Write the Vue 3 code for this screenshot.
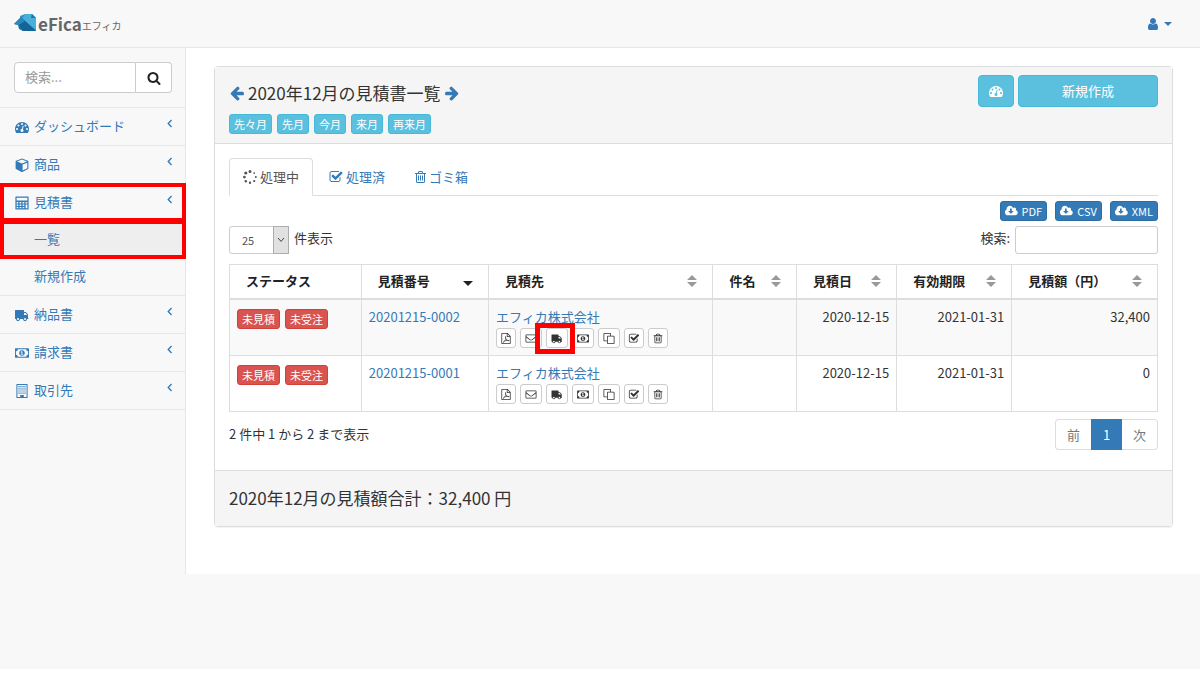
<script setup>
import { h, ref } from 'vue'

const glyphs = {
  dash: ['0 0 1792 1792', 'M384 1152q0-53-37.5-90.5t-90.5-37.5-90.5 37.5-37.5 90.5 37.5 90.5 90.5 37.5 90.5-37.5 37.5-90.5zm192-448q0-53-37.5-90.5t-90.5-37.5-90.5 37.5-37.5 90.5 37.5 90.5 90.5 37.5 90.5-37.5 37.5-90.5zm428 481l101-382q6-26-7.5-48.5t-38.5-29.5-48 6.5-30 39.5l-101 382q-60 5-107 43.5t-63 98.5q-20 77 20 146t117 89 146-20 89-117q16-60-6-117t-72-91zm660-33q0-53-37.5-90.5t-90.5-37.5-90.5 37.5-37.5 90.5 37.5 90.5 90.5 37.5 90.5-37.5 37.5-90.5zm-640-640q0-53-37.5-90.5t-90.5-37.5-90.5 37.5-37.5 90.5 37.5 90.5 90.5 37.5 90.5-37.5 37.5-90.5zm448 192q0-53-37.5-90.5t-90.5-37.5-90.5 37.5-37.5 90.5 37.5 90.5 90.5 37.5 90.5-37.5 37.5-90.5zm320 448q0 261-141 483-19 29-54 29h-1402q-35 0-54-29-141-221-141-483 0-182 71-348t191-286 286-191 348-71 348 71 286 191 191 286 71 348z'],
  search: ['0 0 1792 1792', 'M1216 832q0-185-131.5-316.5t-316.5-131.5-316.5 131.5-131.5 316.5 131.5 316.5 316.5 131.5 316.5-131.5 131.5-316.5zm512 832q0 52-38 90t-90 38q-54 0-90-38l-343-342q-179 124-399 124-143 0-273.5-55.5t-225-150-150-225-55.5-273.5 55.5-273.5 150-225 225-150 273.5-55.5 273.5 55.5 225 150 150 225 55.5 273.5q0 220-124 399l343 343q37 37 37 90z'],
  user: ['0 0 1792 1792', 'M1536 1399q0 109-62.5 187t-150.5 78h-854q-88 0-150.5-78t-62.5-187q0-85 8.5-160.5t31.5-152 58.5-131 94-89 134.5-34.5q131 128 313 128t313-128q76 0 134.5 34.5t94 89 58.5 131 31.5 152 8.5 160.5zm-256-887q0 159-112.5 271.5t-271.5 112.5-271.5-112.5-112.5-271.5 112.5-271.5 271.5-112.5 271.5 112.5 112.5 271.5z'],
  truck: ['0 0 1792 1792', 'M640 1408q0-52-38-90t-90-38-90 38-38 90 38 90 90 38 90-38 38-90zm-384-512h384v-256h-158q-13 0-22 9l-195 195q-9 9-9 22v30zm1280 512q0-52-38-90t-90-38-90 38-38 90 38 90 90 38 90-38 38-90zm256-1088v1024q0 15-4 26.5t-13.5 18.5-16.5 11.5-23.5 6-22.5 2-25.5 0-22.5-.5q0 106-75 181t-181 75-181-75-75-181h-384q0 106-75 181t-181 75-181-75-75-181h-64q-3 0-22.5.5t-25.5 0-22.5-2-23.5-6-16.5-11.5-13.5-18.5-4-26.5q0-26 19-45t45-19v-320q0-8-.5-35t0-38 2.5-34.5 6.5-37 14-30.5 22.5-30l198-198q19-19 50.5-32t58.5-13h160v-192q0-26 19-45t45-19h1024q26 0 45 19t19 45z', true],
  left: ['0 0 1792 1792', 'M1664 896v128q0 53-32.5 90.5t-84.5 37.5h-704l293 294q38 36 38 90t-38 90l-75 76q-37 37-90 37-52 0-91-37l-651-652q-37-37-37-90 0-52 37-91l651-650q38-38 91-38 52 0 90 38l75 74q38 38 38 91t-38 91l-293 293h704q52 0 84.5 37.5t32.5 90.5z'],
  check: ['0 0 1792 1792', 'M1472 930v318q0 119-84.5 203.5t-203.5 84.5h-832q-119 0-203.5-84.5t-84.5-203.5v-832q0-119 84.5-203.5t203.5-84.5h832q63 0 117 25 15 7 18 23 3 17-9 29l-49 49q-10 10-23 10-3 0-9-2-23-6-45-6h-832q-66 0-113 47t-47 113v832q0 66 47 113t113 47h832q66 0 113-47t47-113v-254q0-13 9-22l64-64q10-10 23-10 6 0 12 3 20 8 20 29zm231-489l-814 814q-24 24-57 24t-57-24l-430-430q-24-24-24-57t24-57l110-110q24-24 57-24t57 24l263 263 647-647q24-24 57-24t57 24l110 110q24 24 24 57t-24 57z'],
  trash: ['192 0 1408 1792', 'M704 736v576q0 14-9 23t-23 9h-64q-14 0-23-9t-9-23v-576q0-14 9-23t23-9h64q14 0 23 9t9 23zm256 0v576q0 14-9 23t-23 9h-64q-14 0-23-9t-9-23v-576q0-14 9-23t23-9h64q14 0 23 9t9 23zm256 0v576q0 14-9 23t-23 9h-64q-14 0-23-9t-9-23v-576q0-14 9-23t23-9h64q14 0 23 9t9 23zm128 724v-948h-896v948q0 22 7 40.5t14.5 27 10.5 8.5h832q3 0 10.5-8.5t14.5-27 7-40.5zm-672-1076h448l-48-117q-7-9-17-11h-317q-10 2-17 11zm928 32v64q0 14-9 23t-23 9h-96v948q0 83-47 143.5t-113 60.5h-832q-66 0-113-58.5t-47-141.5v-952h-96q-14 0-23-9t-9-23v-64q0-14 9-23t23-9h309l70-167q15-37 54-63t79-26h320q40 0 79 26t54 63l70 167h309q14 0 23 9t9 23z'],
  cloud: ['0 0 1856 1792', 'M1216 928q0-14-9-23t-23-9h-224v-352q0-13-9.5-22.5t-22.5-9.5h-192q-13 0-22.5 9.5t-9.5 22.5v352h-224q-13 0-22.5 9.5t-9.5 22.5q0 14 9 23l352 352q9 9 23 9t23-9l351-351q10-12 10-24zm640 224q0 159-112.5 271.5t-271.5 112.5h-1088q-185 0-316.5-131.5t-131.5-316.5q0-130 70-240t188-165q-2-30-2-43 0-212 150-362t362-150q156 0 285.5 87t188.5 231q71-62 166-62 106 0 181 75t75 181q0 76-41 138 130 31 213.5 135.5t83.5 238.5z'],
  cube: ['0 0 14 14', 'M7 0.5L13 2.8Q13.4 3 13.4 3.5V10.3Q13.4 10.8 13 11L7.5 13.9Q7 14.1 6.5 13.9L1 11Q.6 10.8 .6 10.3V3.5Q.6 3 1 2.8ZM7 1.6L2 3.5L7 5.4L12 3.5ZM7.6 12.6L12.3 10.2V4.8L7.6 6.6Z'],
  calc: ['0 0 14 14', 'M1 .5H13Q13.6 .5 13.6 1.1V12.9Q13.6 13.5 13 13.5H1Q.4 13.5 .4 12.9V1.1Q.4 .5 1 .5ZM1.6 1.8V4.6H12.4V1.8ZM1.6 6V7.5H3.3V6ZM4.6 6V7.5H6.3V6ZM7.6 6V7.5H9.3V6ZM10.6 6V7.5H12.4V6ZM1.6 8.5V10H3.3V8.5ZM4.6 8.5V10H6.3V8.5ZM7.6 8.5V10H9.3V8.5ZM10.6 8.5V12.3H12.4V8.5ZM1.6 11V12.3H3.3V11ZM4.6 11V12.3H6.3V11ZM7.6 11V12.3H9.3V11Z'],
  money: ['0 0 15 14', 'M.5 2H14.5Q15 2 15 2.5V11.5Q15 12 14.5 12H.5Q0 12 0 11.5V2.5Q0 2 .5 2ZM3 3Q3 5 1 5V9Q3 9 3 11H12Q12 9 14 9V5Q12 5 12 3ZM7.5 4C9.3 4 10.5 5.3 10.5 7S9.3 10 7.5 10S4.5 8.7 4.5 7S5.7 4 7.5 4ZM7.1 5L6 6L6.5 6.6L7 6.3V8.3H6.1V9H9V8.3H8V5Z'],
  building: ['0 0 14 14', 'M2 0H12Q12.6 0 12.6 .6V13.4Q12.6 14 12 14H2Q1.4 14 1.4 13.4V.6Q1.4 0 2 0ZM2.4 1V13H5.2V11H8.8V13H11.6V1ZM3.4 2H4.6V3.2H3.4ZM5.4 2H6.6V3.2H5.4ZM7.4 2H8.6V3.2H7.4ZM9.4 2H10.6V3.2H9.4ZM3.4 4.2H4.6V5.4H3.4ZM5.4 4.2H6.6V5.4H5.4ZM7.4 4.2H8.6V5.4H7.4ZM9.4 4.2H10.6V5.4H9.4ZM3.4 6.4H4.6V7.6H3.4ZM5.4 6.4H6.6V7.6H5.4ZM7.4 6.4H8.6V7.6H7.4ZM9.4 6.4H10.6V7.6H9.4ZM3.4 8.6H4.6V9.8H3.4ZM5.4 8.6H6.6V9.8H5.4ZM7.4 8.6H8.6V9.8H7.4ZM9.4 8.6H10.6V9.8H9.4Z'],
  mail: ['0 0 14 14', 'M1.2 2H12.8Q14 2 14 3.2V10.9Q14 12.1 12.8 12.1H1.2Q0 12.1 0 10.9V3.2Q0 2 1.2 2ZM1 3V3.8Q1 4.4 2 5.2L6 8.3Q7 9 8 8.3L12 5.2Q13 4.4 13 3.8V3ZM1 5.6V11.1H13V5.6L8.7 9Q7 10.2 5.3 9Z'],
  pdf: ['0 0 14 14', 'M1.5 0H9L12.9 3.9V13.2Q12.9 14 12.1 14H1.9Q1.1 14 1.1 13.2V.8Q1.1 0 1.9 0ZM2.1 1V13H11.9V5H8.6Q8 5 8 4.4V1ZM9 1.3V4H11.7ZM6.2 4.2Q7.6 3.6 7 6.6Q7.9 8.5 9.4 9Q11.5 9 11.2 10.2Q10.3 10.7 8.9 9.9Q7 10 5.4 10.5Q3.9 12.8 3 12.2Q2.8 11.2 4.8 10.1Q6 8 6.2 6.7Q5.6 4.8 6.2 4.2ZM6.7 7.7L5.9 9.5L8 9.1Z'],
  copy: ['0 0 14 14', 'M1 0H8.6Q9.5 0 9.5 .9V3.6H13.1Q14 3.6 14 4.5V13.1Q14 14 13.1 14H5.4Q4.5 14 4.5 13.1V10.4H.9Q0 10.4 0 9.5V.9Q0 0 1 0ZM1 1V9.4H4.5V4.5Q4.5 3.6 5.4 3.6H8.5V1ZM5.5 4.6V13H13V4.6Z'],
  chev: ['0 0 8 14', 'M6 2L1.2 7L6 12L7.2 10.8L3.6 7L7.2 3.2Z'],
  spin: ['0 0 14 14', 'M7 0A1.5 1.5 0 1 1 7 3A1.5 1.5 0 1 1 7 0ZM2.8 1.4A1.6 1.6 0 1 1 2.8 4.6A1.6 1.6 0 1 1 2.8 1.4ZM1.4 5.7A1.4 1.4 0 1 1 1.4 8.5A1.4 1.4 0 1 1 1.4 5.7ZM2.8 9.9A1.3 1.3 0 1 1 2.8 12.5A1.3 1.3 0 1 1 2.8 9.9ZM7 11.5A1.2 1.2 0 1 1 7 13.9A1.2 1.2 0 1 1 7 11.5ZM11.2 10A1.1 1.1 0 1 1 11.2 12.2A1.1 1.1 0 1 1 11.2 10ZM12.8 6.1A1 1 0 1 1 12.8 8.1A1 1 0 1 1 12.8 6.1ZM11.2 2.2A.9 .9 0 1 1 11.2 4A.9 .9 0 1 1 11.2 2.2Z'],
}

const Icon = ({ name, flip }) => {
  const [viewBox, d, mirrored] = glyphs[name]
  const width = Number(viewBox.split(' ')[2])
  const turn = flip || mirrored
  return h('svg', { viewBox, 'aria-hidden': 'true' }, [
    h('path', { d, 'fill-rule': 'evenodd', fill: 'currentColor', transform: turn ? `translate(${width} 0) scale(-1 1)` : undefined }),
  ])
}
Icon.props = ['name', 'flip']

const menu = [
  { icon: 'dash', label: 'ダッシュボード' },
  { icon: 'cube', label: '商品' },
  { icon: 'calc', label: '見積書', marked: true, children: [{ label: '一覧', marked: true }, { label: '新規作成' }] },
  { icon: 'truck', label: '納品書' },
  { icon: 'money', label: '請求書' },
  { icon: 'building', label: '取引先' },
]
const months = ['先々月', '先月', '今月', '来月', '再来月']
const tabs = [
  { icon: 'spin', label: '処理中' },
  { icon: 'check', label: '処理済' },
  { icon: 'trash', label: 'ゴミ箱' },
]
const activeTab = ref('処理中')
const columns = [
  { label: 'ステータス', key: 'status' },
  { label: '見積番号', key: 'number', sort: 'desc' },
  { label: '見積先', key: 'client', sort: 'both' },
  { label: '件名', key: 'subject', sort: 'both' },
  { label: '見積日', key: 'date', sort: 'both' },
  { label: '有効期限', key: 'limit', sort: 'both' },
  { label: '見積額（円）', key: 'amount', sort: 'both' },
]
const rows = [
  { number: '20201215-0002', date: '2020-12-15', limit: '2021-01-31', amount: '32,400', marked: 'truck' },
  { number: '20201215-0001', date: '2020-12-15', limit: '2021-01-31', amount: '0' },
]
const actions = [
  { icon: 'pdf', title: 'PDF' },
  { icon: 'mail', title: 'メール' },
  { icon: 'truck', title: '納品書' },
  { icon: 'money', title: '請求書' },
  { icon: 'copy', title: '複製' },
  { icon: 'check', title: '処理済' },
  { icon: 'trash', title: 'ゴミ箱' },
]
</script>

<template>
  <div class="page">
    <header class="topbar">
      <a class="brand" href="#">
        <svg class="logo" viewBox="0 0 23 20" aria-hidden="true">
          <path d="M6 3L11 1L18 1L22 5V18L9 18Z" fill="#2c95c9" />
          <path d="M11 1L18 1L17 5L22 5V17L8 6Z" fill="#4ab0da" />
          <path d="M17 5L18 1L22 5Z" fill="#1d74a8" />
          <path d="M0 11L7 4L22 18L9 18L5 16L4 12Z" fill="#1b74ab" />
          <path d="M0 11L7 4L11 8L5 12Z" fill="#2d88ba" />
          <path d="M5 12L11 8L22 18L9 18Z" fill="#14649a" />
        </svg>
        <strong>eFica</strong><span>エフィカ</span>
      </a>
      <button class="account" type="button" aria-label="アカウント">
        <Icon class="icon" name="user" /><i class="caret"></i>
      </button>
    </header>

    <div class="body">
      <nav class="sidebar">
        <form class="side-search" @submit.prevent>
          <input type="text" placeholder="検索..." aria-label="検索" />
          <button type="submit" aria-label="検索する"><Icon class="icon" name="search" /></button>
        </form>
        <ul class="menu">
          <li v-for="item in menu" :key="item.label">
            <a href="#" class="entry" :class="{ marked: item.marked }">
              <Icon class="icon" :name="item.icon" /><span>{{ item.label }}</span><Icon class="chev" name="chev" />
            </a>
            <ul v-if="item.children" class="submenu">
              <li v-for="child in item.children" :key="child.label">
                <a href="#" class="child" :class="{ marked: child.marked, current: child.marked }">{{ child.label }}</a>
              </li>
            </ul>
          </li>
        </ul>
      </nav>

      <main class="content">
        <section class="panel">
          <div class="panel-head">
            <div>
              <h1>
                <a href="#" aria-label="前の月"><Icon class="arrow" name="left" /></a>
                <span>2020年12月の見積書一覧</span>
                <a href="#" aria-label="次の月"><Icon class="arrow" name="left" :flip="true" /></a>
              </h1>
              <div class="months">
                <button v-for="m in months" :key="m" type="button">{{ m }}</button>
              </div>
            </div>
            <div class="head-actions">
              <button type="button" class="info" aria-label="ダッシュボード"><Icon class="icon" name="dash" /></button>
              <button type="button" class="info wide">新規作成</button>
            </div>
          </div>

          <div class="panel-body">
            <div class="tabs" role="tablist">
              <button v-for="t in tabs" :key="t.label" type="button" role="tab" :aria-selected="activeTab === t.label" :class="{ active: activeTab === t.label }" @click="activeTab = t.label">
                <Icon class="icon" :class="t.icon" :name="t.icon" /><span>{{ t.label }}</span>
              </button>
            </div>

            <div class="exports">
              <button v-for="f in ['PDF', 'CSV', 'XML']" :key="f" type="button"><Icon class="icon" name="cloud" /><span>{{ f }}</span></button>
            </div>

            <div class="filters">
              <label class="length">
                <span class="select">
                  <select><option>25</option><option>50</option><option>100</option></select>
                  <i><svg viewBox="0 0 8 6" aria-hidden="true"><path d="M1 1L4 4.4L7 1" fill="none" stroke="#444" stroke-width="1" /></svg></i>
                </span>
                <span class="caption">件表示</span>
              </label>
              <label class="find"><span class="caption">検索:</span><input type="text" /></label>
            </div>

            <table>
              <colgroup><col v-for="c in columns" :key="c.key" :class="'c-' + c.key" /></colgroup>
              <thead>
                <tr>
                  <th v-for="c in columns" :key="c.key" scope="col">
                    <div class="th">
                      <span>{{ c.label }}</span>
                      <svg v-if="c.sort === 'both'" class="sort" viewBox="0 0 10 12" aria-hidden="true"><path d="M0 5L5 0L10 5ZM0 7H10L5 12Z" fill="#999" /></svg>
                      <svg v-else-if="c.sort" class="sort" viewBox="0 0 10 12" aria-hidden="true"><path d="M0 6H10L5 11Z" fill="#222" /></svg>
                    </div>
                  </th>
                </tr>
              </thead>
              <tbody>
                <tr v-for="r in rows" :key="r.number">
                  <td><div class="badges"><span>未見積</span><span>未受注</span></div></td>
                  <td><a href="#">{{ r.number }}</a></td>
                  <td>
                    <a href="#">エフィカ株式会社</a>
                    <div class="acts">
                      <button v-for="a in actions" :key="a.icon" type="button" :aria-label="a.title" :class="[a.icon, { marked: r.marked === a.icon }]"><Icon class="icon" :name="a.icon" /></button>
                    </div>
                  </td>
                  <td></td>
                  <td class="num">{{ r.date }}</td>
                  <td class="num">{{ r.limit }}</td>
                  <td class="num">{{ r.amount }}</td>
                </tr>
              </tbody>
            </table>

            <div class="table-foot">
              <span>2 件中 1 から 2 まで表示</span>
              <div class="pager">
                <button type="button">前</button><button type="button" class="on">1</button><button type="button">次</button>
              </div>
            </div>
          </div>

          <div class="panel-foot">2020年12月の見積額合計：32,400 円</div>
        </section>
      </main>
    </div>
  </div>
</template>

<style>
body {
  background: #fff;
}
</style>

<style scoped>
.page {
  min-height: calc(100vh - 6px);
  background: #f8f8f8;
  color: #333;
  font: 13px/20px "Noto Sans CJK JP", sans-serif;
}
.page * {
  box-sizing: border-box;
}
button, input, select {
  font: inherit;
  color: inherit;
  margin: 0;
}
button {
  padding: 0;
  cursor: pointer;
  display: flex;
  align-items: center;
  justify-content: center;
}
a {
  color: #337ab7;
  text-decoration: none;
}
ul {
  list-style: none;
  margin: 0;
  padding: 0;
}
.icon {
  width: 14px;
  height: 14px;
  flex: none;
}
.topbar {
  height: 48px;
  border-bottom: 1px solid #e7e7e7;
  display: flex;
  align-items: center;
  justify-content: space-between;
  padding: 0 28px 0 14px;
}
.brand {
  display: flex;
  align-items: center;
  color: #666;
  font-size: 10px;
}
.logo {
  width: 23px;
  height: 20px;
  margin: 0 1px 2px 0;
}
.brand strong {
  font-size: 17px;
  line-height: 20px;
}
.brand span {
  padding-top: 4px;
}
.account {
  border: 0;
  background: none;
  color: #337ab7;
  gap: 4px;
}
.caret {
  border: 4px solid transparent;
  border-top-color: currentColor;
  border-bottom: 0;
}
.body {
  display: flex;
}
.sidebar {
  width: 185px;
  flex: none;
}
.side-search {
  display: flex;
  margin: 14px 13px 14px 14px;
}
.side-search input {
  flex: 1;
  min-width: 0;
  height: 31px;
  border: 1px solid #ccc;
  border-radius: 4px 0 0 4px;
  background: #fff;
  padding: 0 10px 2px;
}
.side-search input::placeholder {
  color: #999;
  opacity: 1;
}
.side-search button {
  width: 36px;
  border: 1px solid #ccc;
  border-left: 0;
  border-radius: 0 4px 4px 0;
  background: #fff;
  color: #222;
}
.menu {
  border-top: 1px solid #e7e7e7;
}
.menu > li {
  border-bottom: 1px solid #e7e7e7;
}
.entry {
  position: relative;
  height: 37px;
  display: flex;
  align-items: center;
  gap: 5px;
  padding: 0 12px 0 15px;
}
.entry span {
  padding-bottom: 2px;
}
.chev {
  width: 7px;
  height: 11px;
  margin: 0 0 6px auto;
}
.child {
  position: relative;
  height: 37px;
  display: flex;
  align-items: center;
  padding: 0 0 2px 34px;
}
.current {
  background: #eee;
}
.entry.marked::after, .child.marked::after {
  content: "";
  position: absolute;
  inset: -1px -1px -1px 0;
  border: 4px solid #f00;
}
.content {
  flex: 1;
  min-width: 0;
  background: #fff;
  border-left: 1px solid #e7e7e7;
  padding: 18px 27px 47px 28px;
}
.panel {
  border: 1px solid #ddd;
  border-radius: 4px;
  background: #fff;
  box-shadow: 0 1px 1px rgba(0, 0, 0, 0.05);
}
.panel-head {
  display: flex;
  justify-content: space-between;
  align-items: flex-start;
  background: #f5f5f5;
  border-bottom: 1px solid #ddd;
  padding: 8px 14px 9px;
}
h1 {
  display: flex;
  align-items: center;
  gap: 3px;
  margin: 6px 0 9px;
  font-size: 17px;
  font-weight: 400;
  line-height: 24px;
}
.arrow {
  display: block;
  width: 16px;
  height: 18px;
}
.months {
  display: flex;
  gap: 5px;
}
.months button {
  height: 20px;
  padding: 0 4px;
  border: 1px solid #46b8da;
  border-radius: 3px;
  background: #5bc0de;
  color: #fff;
  font-size: 11px;
}
.head-actions {
  display: flex;
  gap: 4px;
}
.info {
  width: 36px;
  height: 32px;
  border: 1px solid #46b8da;
  border-radius: 4px;
  background: #5bc0de;
  color: #fff;
}
.wide {
  width: 140px;
}
.panel-body {
  padding: 14px 14px 20px;
}
.tabs {
  display: flex;
  gap: 2px;
  border-bottom: 1px solid #ddd;
}
.tabs button {
  height: 38px;
  margin-bottom: -1px;
  padding: 0 13px;
  gap: 3px;
  border: 1px solid transparent;
  border-radius: 4px 4px 0 0;
  background: none;
  color: #337ab7;
}
.tabs .active {
  border-color: #ddd #ddd #fff;
  background: #fff;
  color: #555;
}
.tabs .trash {
  width: 11px;
}
.exports {
  display: flex;
  justify-content: flex-end;
  gap: 8px;
  margin: 5px 0;
}
.exports button {
  height: 20px;
  padding: 0 4px;
  gap: 4px;
  border: 1px solid #2e6da4;
  border-radius: 3px;
  background: #337ab7;
  color: #fff;
  font-size: 11px;
}
.exports .icon {
  width: 13px;
  height: 12px;
}
.filters {
  display: flex;
  justify-content: space-between;
  margin-bottom: 10px;
}
.length, .find {
  display: flex;
  align-items: center;
  gap: 5px;
}
.caption {
  padding-bottom: 4px;
}
.select {
  position: relative;
}
.select select {
  display: block;
  appearance: none;
  width: 60px;
  height: 28px;
  padding: 0 12px;
  border: 1px solid #ccc;
  border-radius: 3px;
  background: #fff;
  color: #555;
  font-size: 11px;
}
.select i {
  position: absolute;
  top: 0;
  right: 0;
  width: 16px;
  height: 28px;
  display: flex;
  align-items: center;
  justify-content: center;
  border: 1px solid #adadad;
  background: #e1e1e1;
  pointer-events: none;
}
.select svg {
  width: 8px;
  height: 6px;
}
.find input {
  width: 143px;
  height: 28px;
  border: 1px solid #ccc;
  border-radius: 3px;
  background: #fff;
  padding: 0 8px;
}
table {
  width: 100%;
  table-layout: fixed;
  border-collapse: collapse;
}
.c-status { width: 14.2%; }
.c-number { width: 13.7%; }
.c-client { width: 24.2%; }
.c-subject { width: 9%; }
.c-date { width: 10.8%; }
.c-limit { width: 12.4%; }
th, td {
  border: 1px solid #ddd;
  text-align: left;
  vertical-align: top;
}
th {
  padding: 6px 15px 7px 16px;
  border-bottom-width: 2px;
  color: #222;
  white-space: nowrap;
}
.th {
  display: flex;
  align-items: center;
  justify-content: space-between;
}
.sort {
  width: 10px;
  height: 12px;
  flex: none;
}
td {
  padding: 7px;
}
tbody tr:nth-child(odd) {
  background: #f9f9f9;
}
.num {
  text-align: right;
}
.badges {
  display: flex;
  gap: 5px;
  padding-top: 2px;
}
.badges span {
  height: 20px;
  padding: 0 4px;
  border: 1px solid #d43f3a;
  border-radius: 3px;
  background: #d9534f;
  color: #fff;
  font-size: 11px;
  line-height: 18px;
}
.acts {
  display: flex;
  gap: 4px;
  margin-top: 1px;
}
.acts button {
  position: relative;
  width: 22px;
  height: 20px;
  border: 1px solid #ccc;
  border-radius: 3px;
  background: #fff;
}
.acts .pdf, .acts .check, .acts .trash {
  width: 20px;
}
.acts .icon {
  width: 12px;
  height: 11px;
}
.acts .marked {
  z-index: 1;
}
.acts .marked::after {
  content: "";
  position: absolute;
  inset: -6px -8px -7px -12px;
  border: 5px solid #f00;
}
.table-foot {
  display: flex;
  justify-content: space-between;
  align-items: center;
  margin-top: 7px;
}
.table-foot > span {
  padding-bottom: 2px;
}
.pager {
  display: flex;
}
.pager button {
  height: 31px;
  width: 36px;
  border: 1px solid #ddd;
  background: #fff;
  color: #777;
}
.pager button:first-child {
  border-right: 0;
  border-radius: 4px 0 0 4px;
}
.pager button:last-child {
  border-left: 0;
  border-radius: 0 4px 4px 0;
}
.pager .on {
  width: 31px;
  border-color: #337ab7;
  background: #337ab7;
  color: #fff;
}
.panel-foot {
  padding: 15px 14px 16px;
  border-top: 1px solid #ddd;
  background: #f5f5f5;
  font-size: 17px;
  line-height: 24px;
}
</style>
